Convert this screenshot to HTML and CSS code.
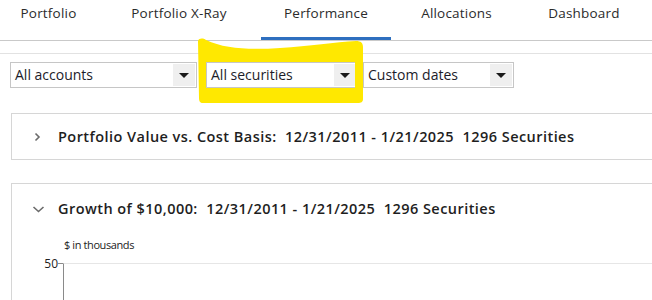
FILE: index.html
```html
<!DOCTYPE html>
<html lang="en">
<head>
    <meta charset="UTF-8">
    <meta name="viewport" content="width=device-width, initial-scale=1.0">
    <title>Performance</title>
    <link rel="stylesheet" href="styles.css">
</head>
<body>

    <nav class="tabs">
        <div class="tab tab-portfolio">Portfolio</div>
        <div class="tab tab-xray">Portfolio X-Ray</div>
        <div class="tab tab-performance active">Performance</div>
        <div class="tab tab-allocations">Allocations</div>
        <div class="tab tab-dashboard">Dashboard</div>
    </nav>
    <div class="subbar"></div>

    <div class="filters">
        <div class="dropdown dd-accounts">
            <span class="dd-label">All accounts</span>
            <span class="dd-arrow"></span>
        </div>
        <div class="dropdown dd-securities">
            <span class="dd-label">All securities</span>
            <span class="dd-arrow"></span>
        </div>
        <div class="dropdown dd-dates">
            <span class="dd-label">Custom dates</span>
            <span class="dd-arrow"></span>
        </div>
    </div>

    <section class="panel panel-closed">
        <div class="panel-head">
            <svg class="chevron" width="10" height="10" viewBox="0 0 10 10"><path d="M2.5 1.5 L6 5 L2.5 8.5" fill="none" stroke="#6b6b6b" stroke-width="1.6"/></svg>
            <span class="panel-title">Portfolio Value vs. Cost Basis:&nbsp; 12/31/2011 - 1/21/2025&nbsp; 1296 Securities</span>
        </div>
    </section>

    <section class="panel panel-open">
        <div class="panel-head">
            <svg class="chevron" width="14" height="10" viewBox="0 0 14 10"><path d="M1.5 3 L6.5 7.5 L11.5 3" fill="none" stroke="#6b6b6b" stroke-width="1.6"/></svg>
            <span class="panel-title">Growth of $10,000:&nbsp; 12/31/2011 - 1/21/2025&nbsp; 1296 Securities</span>
        </div>
        <div class="chart">
            <div class="chart-unit">$ in thousands</div>
            <div class="chart-plot">
                <div class="y-label">50</div>
                <div class="plot-area"></div>
            </div>
        </div>
    </section>

    <svg class="highlight" width="652" height="300" viewBox="0 0 652 300">
        <path fill="#ffe800" fill-rule="evenodd"
              d="M198 41 C199 38 203 38 206 40 C225 49 250 50 280 48 C310 46 335 42 356 41 C361 41 363 43 363 47 L363 99 C363 102 361 103 358 103 L203 103 C200 103 199 101 199 98 Z
                 M206 62 L355 62 L355 88 L206 88 Z"/>
    </svg>

</body>
</html>
```

FILE: styles.css
```css
body {
    margin: 0;
    padding: 0;
    width: 652px;
    height: 300px;
    overflow: hidden;
    position: relative;
    background: white;
    font-family: "Open Sans", "Noto Sans", sans-serif;
    color: #222;
}

.tabs {
    display: flex;
    height: 40px;
    border-bottom: 1px solid #c9c9c9;
}

.tab {
    box-sizing: border-box;
    height: 40px;
    padding-top: 4px;
    line-height: 18px;
    font-size: 13.5px;
    letter-spacing: 0.2px;
    color: #2b2b2b;
    text-align: center;
    border-bottom: 3px solid transparent;
}

.tab-portfolio { width: 97px; }
.tab-xray { width: 164px; }
.tab-performance { width: 130px; }
.tab-allocations { width: 131px; }
.tab-dashboard { width: 124px; }

.tab.active {
    border-bottom-color: #2e6fbf;
}

.subbar {
    height: 12px;
    border-bottom: 1px solid #e2e2e2;
}

.filters {
    display: flex;
    padding: 8px 0 0 10px;
    height: 26px;
}

.dropdown {
    box-sizing: border-box;
    display: flex;
    height: 26px;
    border: 1px solid #c6c6c6;
    background: white;
    margin-right: 9px;
}

.dd-accounts { width: 187px; }
.dd-securities { width: 152px; margin-right: 5px; }
.dd-dates { width: 151px; }

.dd-label {
    flex: 1;
    padding-left: 4px;
    line-height: 24px;
    font-size: 14px;
    color: #1c1c2a;
}

.dd-arrow {
    width: 22px;
    margin: 1px;
    background: #efefef;
    position: relative;
}

.dd-arrow::after {
    content: "";
    position: absolute;
    left: 6px;
    top: 9px;
    border-left: 5px solid transparent;
    border-right: 5px solid transparent;
    border-top: 5px solid #1a1a1a;
}

.panel {
    box-sizing: border-box;
    margin-left: 11px;
    border: 1px solid #d6d6d6;
    border-right: none;
    background: white;
}

.panel-closed {
    margin-top: 25px;
    height: 47px;
}

.panel-open {
    margin-top: 23px;
    height: 117px;
    border-bottom: none;
}

.panel-head {
    display: flex;
    align-items: center;
    height: 45px;
    padding-left: 21px;
}

.panel-open .panel-head {
    padding-left: 20px;
    height: 49px;
}

.chevron {
    margin-right: 15px;
}

.panel-open .chevron {
    margin-right: 12px;
}

.panel-title {
    font-size: 14.5px;
    font-weight: 600;
    letter-spacing: 0.45px;
    color: #1e1e1e;
    white-space: nowrap;
}

.chart {
    padding-left: 52px;
}

.chart-unit {
    font-size: 11px;
    color: #222;
    letter-spacing: -0.4px;
    line-height: 14px;
    margin-top: 5px;
}

.chart-plot {
    display: flex;
    margin-top: 11px;
    margin-left: -20px;
}

.y-label {
    width: 14px;
    font-size: 12px;
    line-height: 12px;
    text-align: right;
    color: #222;
    margin-top: -5px;
    position: relative;
}

.y-label::after {
    content: "";
    position: absolute;
    right: -5px;
    top: 5px;
    width: 5px;
    border-top: 1px solid #8a8a8a;
}

.plot-area {
    flex: 1;
    margin-left: 5px;
    height: 36px;
    border-top: 1px solid #e6e6e6;
    border-left: 1px solid #8a8a8a;
}

.highlight {
    position: absolute;
    left: 0;
    top: 0;
    pointer-events: none;
}
```
